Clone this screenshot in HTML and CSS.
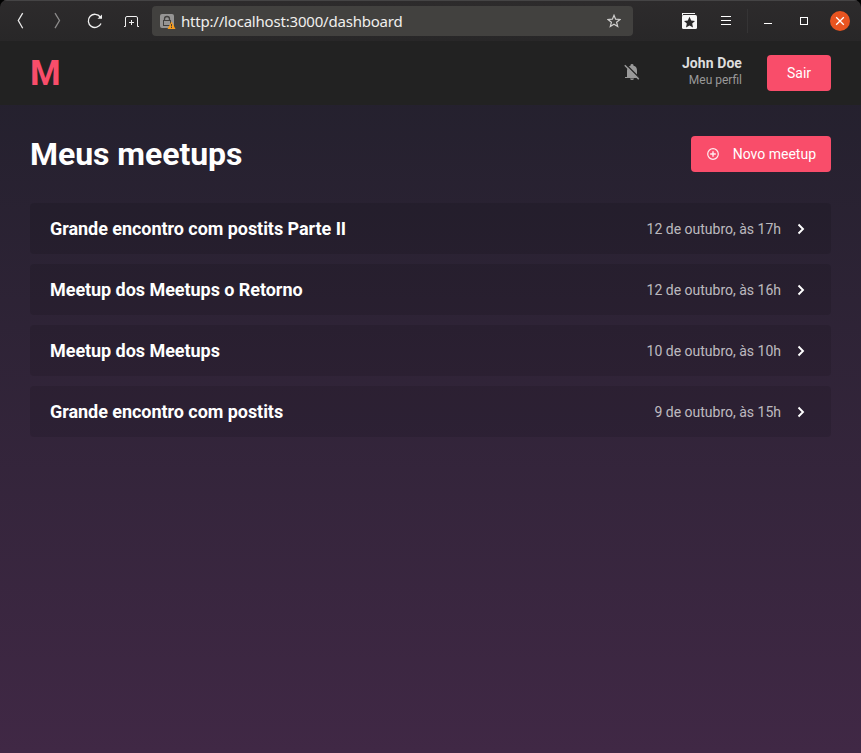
FILE: index.html
```
<!DOCTYPE html>
<html lang="pt-BR">
<head>
<meta charset="utf-8">
<title>Meetapp</title>
<link rel="stylesheet" href="styles.css">
</head>
<body>
<div class="window">
  <div class="toolbar">
    <div class="nav">
      <svg width="36" height="40" viewBox="0 0 36 40" fill="none" stroke="#e8e8e8" stroke-width="1.3"><path d="M22.700 13.200L18.300 20.500L22.700 28.200"/></svg>
      <svg width="38" height="40" viewBox="36 0 38 40" fill="none" stroke="#8c8b8b" stroke-width="1.300"><path d="M55 13.200L59.500 20.500L55 28.200"/></svg>
      <svg width="38" height="40" viewBox="74 0 38 40" fill="none" stroke="#f0f0f0" stroke-width="1.300"><path d="M100.300 17A6.600 6.600 0 1 0 101 23.500"/><path d="M102 14.500V18.700H97.500Z" fill="#f0f0f0" stroke="none"/></svg>
      <svg width="38" height="40" viewBox="112 0 38 40" fill="none" stroke="#f0f0f0" stroke-width="1"><path d="M124 26.500H125.500V18Q125.500 16.500 127 16.500H136Q137.500 16.500 137.500 18V26.500H139M129 22.500H134M131.500 20V25"/></svg>
    </div>
    <div class="address">
      <svg class="lock" width="16" height="16" viewBox="0 0 16 16"><rect width="14" height="14" rx="2" fill="#969594"/><path d="M4.500 6.500V5a2.500 2.500 0 0 1 5 0v1.500" fill="none" stroke="#42413f" stroke-width="1.300"/><rect x="3.500" y="6.500" width="7" height="5" fill="none" stroke="#42413f"/><path d="M11.500 7.500L15.500 15H7.500Z" fill="#f99d1c"/><path d="M11.500 10V12.400M11.500 13V14" stroke="#42413f"/></svg>
      <span class="url">http://localhost:3000/dashboard</span>
      <svg class="star" width="14" height="14" viewBox="0 0 14 14" fill="none" stroke="#d0cfce" stroke-width="1.200"><path d="M7 1.300L8.600 5.200L12.900 5.500L9.600 8.200L10.700 12.500L7 10.200L3.300 12.500L4.400 8.200L1.100 5.500L5.400 5.200Z"/></svg>
    </div>
    <svg class="controls" width="228" height="41" viewBox="633 0 228 41">
      <path d="M682.500 13.500H695" stroke="#f5f5f5"/><path d="M682.500 13V15.500" stroke="#f5f5f5"/>
      <rect x="682" y="15" width="15" height="14" rx="1.500" fill="#f7f7f7"/>
      <path d="M689.500 16.800L691.200 20.400L695 20.900L692.200 23.400L693 27.400L689.500 25.400L686 27.400L686.800 23.400L684 20.900L687.800 20.400Z" fill="#292829"/>
      <path d="M721 16.500H731M721 20.500H731M721 24.500H731" stroke="#fff"/>
      <path d="M747.500 9V33" stroke="#353435"/>
      <path d="M764 23.500H772" stroke="#fff"/>
      <rect x="800.500" y="17.500" width="7" height="7" fill="none" stroke="#fff"/>
      <circle cx="840" cy="21" r="10" fill="#e95420"/>
      <path d="M836.200 17.200L843.800 24.800M843.800 17.200L836.200 24.800" stroke="#fff" stroke-width="1.300"/>
    </svg>
  </div>
  <div class="page">
    <header class="header">
      <span class="logo">M</span>
      <div class="account">
        <svg class="bell" width="16" height="18" viewBox="0 0 16 18"><path d="M3 14V7.500Q3.200 3.500 6.500 2.800V2.200Q6.500 1 8 1T9.500 2.200V2.800Q13 3.500 13 7.500V12L15 14V15H1V14Z" fill="#999"/><path d="M6 15.500H10Q9.600 17 8 17T6 15.500Z" fill="#999"/><path d="M1.800 1.200L15.800 15.200" stroke="#222" stroke-width="1.400"/><path d="M.8 2.200L14.800 16.200" stroke="#999" stroke-width="1.500"/></svg>
        <div class="profile"><strong>John Doe</strong><span>Meu perfil</span></div>
        <button class="button logout">Sair</button>
      </div>
    </header>
    <main class="content">
      <div class="heading">
        <h1>Meus meetups</h1>
        <button class="button create"><svg width="12" height="12" viewBox="0 0 12 12" fill="none" stroke="#fff" stroke-opacity=".9"><circle cx="6" cy="6" r="5.300" stroke-width="1.200"/><path d="M6 3.200V8.800M3.200 6H8.800" stroke-width="1.400"/></svg><span>Novo meetup</span></button>
      </div>
      <ul class="meetups">
        <li><strong>Grande encontro com postits Parte II</strong><time>12 de outubro, às 17h</time><svg class="chevron" viewBox="0 0 8 12"><path d="M1.500 1.500L6 6L1.500 10.500"/></svg></li>
        <li><strong>Meetup dos Meetups o Retorno</strong><time>12 de outubro, às 16h</time><svg class="chevron" viewBox="0 0 8 12"><path d="M1.500 1.500L6 6L1.500 10.500"/></svg></li>
        <li><strong>Meetup dos Meetups</strong><time>10 de outubro, às 10h</time><svg class="chevron" viewBox="0 0 8 12"><path d="M1.500 1.500L6 6L1.500 10.500"/></svg></li>
        <li><strong>Grande encontro com postits</strong><time>9 de outubro, às 15h</time><svg class="chevron" viewBox="0 0 8 12"><path d="M1.500 1.500L6 6L1.500 10.500"/></svg></li>
      </ul>
    </main>
  </div>
</div>
</body>
</html>
```
FILE: styles.css
```
* { box-sizing: border-box; margin: 0; padding: 0; }
body { background: #000; font: 14px Roboto, sans-serif; color: #fff; }
svg { display: block; flex: none; }
.window { height: 753px; display: flex; flex-direction: column; border-radius: 7px 7px 0 0; overflow: hidden; }
.toolbar { height: 41px; display: flex; background: linear-gradient(#2d2b2c, #282728); box-shadow: inset 0 1px #454445; }
.nav { display: flex; width: 152px; }
.address { width: 481px; height: 30px; margin-top: 6px; padding: 0 12px 0 8px; display: flex; align-items: center; background: #42413f; border-radius: 4px; }
.lock { margin-top: 2px; }
.url { margin-left: 5px; flex: 1; font: 15px/28px "Noto Sans", sans-serif; letter-spacing: -.2px; color: #f0efed; white-space: nowrap; margin-top: -1px; }
.page { flex: 1; background: linear-gradient(180deg, #22202c, #402845); }
.header { height: 64px; padding: 0 30px; display: flex; align-items: center; justify-content: space-between; background: #222; }
.logo { font-size: 35px; line-height: 41px; font-weight: 700; color: #f94d6a; }
.account { display: flex; align-items: center; }
.bell { margin-right: 42px; margin-top: -2px; }
.profile { text-align: right; margin-right: 25px; margin-top: -5px; }
.profile strong { display: block; line-height: 16px; letter-spacing: .08px; color: #ddd; }
.profile span { display: block; font-size: 12px; line-height: 14px; margin-top: 2px; color: #999; }
.button { height: 36px; border: 0; border-radius: 4px; background: #f94d6a; color: #fff; font: 14px Roboto, sans-serif; }
.logout { width: 64px; }
.content { padding: 31px 30px; }
.heading { display: flex; align-items: center; justify-content: space-between; height: 36px; }
h1 { font-size: 32px; line-height: 36px; font-weight: 700; letter-spacing: -.06px; }
.create { width: 140px; padding: 0 15px 0 16px; display: flex; align-items: center; justify-content: space-between; }
.meetups { margin-top: 31px; display: flex; flex-direction: column; gap: 10px; list-style: none; }
.meetups li { height: 51px; padding: 0 26px 0 20px; display: flex; align-items: center; background: rgba(0, 0, 0, .1); border-radius: 4px; }
.meetups strong { flex: 1; font-size: 18px; letter-spacing: -.05px; }
.meetups time { color: rgba(255, 255, 255, .7); }
.chevron { width: 8px; height: 12px; margin-left: 16px; fill: none; stroke: #fff; stroke-width: 1.9; }
```
